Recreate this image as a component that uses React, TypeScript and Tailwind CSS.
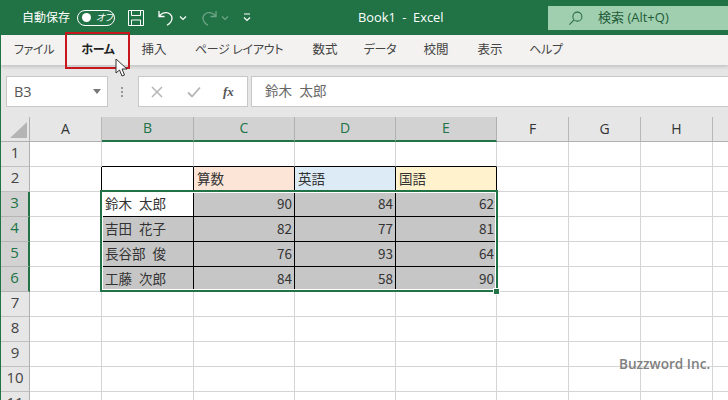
import { ReactNode } from "react";

const jp = "font-['Open_Sans','Noto_Sans_CJK_JP',sans-serif]";
const cellFont = "font-['Noto_Sans_CJK_JP',sans-serif]";
const kana = "[font-feature-settings:'palt'] text-[12px] tracking-[-0.3px]";

const tabs = [
  { label: "ファイル", w: "w-[66px]", cls: kana },
  { label: "ホーム", w: "w-[62px]", bold: true, cls: kana },
  { label: "挿入", w: "w-[50px]", cls: "text-[12.5px]" },
  { label: "ページ レイアウト", w: "w-[120px]", cls: kana },
  { label: "数式", w: "w-[52px]", cls: "text-[12.5px]" },
  { label: "データ", w: "w-[58px]", cls: kana },
  { label: "校閲", w: "w-[54px]", cls: "text-[12.5px]" },
  { label: "表示", w: "w-[54px]", cls: "text-[12.5px]" },
  { label: "ヘルプ", w: "w-[58px]", cls: kana },
];

const columns = [
  { name: "A", w: 72 },
  { name: "B", w: 92, sel: true },
  { name: "C", w: 101, sel: true },
  { name: "D", w: 101, sel: true },
  { name: "E", w: 101, sel: true },
  { name: "F", w: 72 },
  { name: "G", w: 72 },
  { name: "H", w: 72 },
  { name: "", w: 16 },
];

const scores = [
  { name: "鈴木 太郎", v: [90, 84, 62] },
  { name: "吉田 花子", v: [82, 77, 81] },
  { name: "長谷部 俊", v: [76, 93, 64] },
  { name: "工藤 次郎", v: [84, 58, 90] },
];

function Cell({ className = "", children }: { className?: string; children?: ReactNode }) {
  return (
    <div className={`flex items-center border-r border-b overflow-hidden whitespace-nowrap pb-[2px] text-[13.5px] text-[#333] ${cellFont} ${className}`}>
      {children}
    </div>
  );
}

function RowHead({ n, sel }: { n: number; sel?: boolean }) {
  return (
    <div
      className={`flex items-center justify-center border-b pb-[3px] text-[15px] ${sel ? "bg-[#d2d2d2] text-[#217346] border-b-[#b5b5b5] border-r-2 border-r-[#217346]" : "bg-[#e6e6e6] text-[#444] border-b-[#c0c0c0] border-r border-r-[#b0b0b0]"} font-['Open_Sans',sans-serif]`}
    >
      {n}
    </div>
  );
}

function Sheet() {
  const blank = "border-[#d4d4d4]";
  const rows = [];

  for (let r = 1; r <= 11; r++) {
    const cells: ReactNode[] = [];
    const sel = r >= 3 && r <= 6;
    cells.push(<RowHead key="h" n={r} sel={sel} />);

    columns.forEach((c, i) => {
      const key = c.name + i;
      if (r === 1 && i >= 1 && i <= 4) {
        cells.push(<Cell key={key} className="border-r-[#d4d4d4] border-b-black" />);
      } else if (r === 2 && i === 0) {
        cells.push(<Cell key={key} className="border-r-black border-b-[#d4d4d4]" />);
      } else if (r === 2 && i >= 1 && i <= 4) {
        const bg = ["bg-white", "bg-[#fce4d6]", "bg-[#ddebf7]", "bg-[#fff2cc]"][i - 1];
        const txt = ["", "算数", "英語", "国語"][i - 1];
        cells.push(
          <Cell key={key} className={`border-black pl-[3px] ${bg}`}>
            {txt}
          </Cell>,
        );
      } else if (sel && i === 0) {
        cells.push(<Cell key={key} className="border-r-black border-b-[#d4d4d4]" />);
      } else if (sel && i === 1) {
        const first = r === 3;
        cells.push(
          <Cell key={key} className={`border-black pl-[3px] [word-spacing:4px] ${first ? "bg-white" : "bg-[#c6c6c6]"}`}>
            {scores[r - 3].name}
          </Cell>,
        );
      } else if (sel && i <= 4) {
        cells.push(
          <Cell key={key} className="border-black bg-[#c6c6c6] justify-end pr-[2px]">
            {scores[r - 3].v[i - 2]}
          </Cell>,
        );
      } else {
        cells.push(<Cell key={key} className={blank} />);
      }
    });
    rows.push(cells);
  }

  return (
    <div className="relative flex-1 overflow-hidden bg-white">
      <div className="grid grid-cols-[29px_72px_92px_101px_101px_101px_72px_72px_72px_16px] auto-rows-[25px]">
        {/* corner + column headers */}
        <div className="relative bg-[#e6e6e6] border-r border-b border-r-[#b0b0b0] border-b-[#b0b0b0]">
          <svg width="29" height="25" className="absolute left-0 top-0">
            <path d="M9 21 L26 21 L26 5 Z" fill="#b4b4b4" />
          </svg>
        </div>
        {columns.map((c, i) => (
          <div
            key={i}
            className={`flex items-center justify-center border-r pb-[2px] text-[14px] font-['Open_Sans',sans-serif] ${c.sel ? "bg-[#d2d2d2] text-[#217346] border-r-[#b0b0b0] border-b-2 border-b-[#217346]" : "bg-[#e6e6e6] text-[#333] border-r-[#b8b8b8] border-b border-b-[#b0b0b0]"}`}
          >
            {c.name}
          </div>
        ))}
        {rows}
      </div>

      {/* selection range B3:E6 */}
      <div className="absolute left-[99px] top-[73px] w-[398px] h-[102px] border-2 border-[#217346] shadow-[inset_0_0_0_1px_#ffffff] pointer-events-none" />
      <div className="absolute left-[492px] top-[171px] w-[7px] h-[7px] bg-[#217346] border border-white" />

      <div className="absolute left-[618px] top-[237px] text-[13.6px] font-semibold text-[#808080] font-['Open_Sans',sans-serif]">
        Buzzword Inc.
      </div>
    </div>
  );
}

export default function App() {
  return (
    <div className={`relative w-[728px] h-[400px] overflow-hidden flex flex-col border-l border-[#217346] bg-white ${jp}`}>
      {/* Title bar */}
      <header className="h-[35px] shrink-0 bg-[#217346] text-white flex items-center pl-[21px] relative">
        <span className="text-[12px] w-[55px] whitespace-nowrap">自動保存</span>
        <div className="w-[38px] h-[16px] rounded-full border border-white flex items-center pl-[4px] gap-[5px]">
          <span className="w-[9px] h-[9px] rounded-full bg-white" />
          <span className="text-[9.5px] italic leading-none whitespace-nowrap [font-feature-settings:'palt']">オフ</span>
        </div>
        <svg width="16" height="16" viewBox="0 0 16 16" className="ml-[13px]" fill="none" stroke="white" strokeWidth="1">
          <path d="M.5.5h15v15H.5z" />
          <path d="M3.5.5v5h9v-5M3.5 15.5v-5.5h9v5.5" />
        </svg>
        <svg width="18" height="18" viewBox="0 0 18 18" className="ml-[13px]" fill="none" stroke="white" strokeWidth="1.3">
          <path d="M2 2v5.5h5.5M2.2 7.2C4 4.8 6.4 3.6 9 3.6c3.2 0 6 2.4 6 5.6 0 2.7-1.600 5-5 7" />
        </svg>
        <svg width="8" height="6" viewBox="0 0 8 6" className="ml-[4px]" fill="none" stroke="white" strokeWidth="1.2">
          <path d="M1 1.500l3 3 3-3" />
        </svg>
        <svg width="18" height="18" viewBox="0 0 18 18" className="ml-[13px]" fill="none" stroke="#6ea588" strokeWidth="1.3">
          <path d="M16 2v5.500h-5.500M15.800 7.200C14 4.800 11.600 3.600 9 3.600c-3.200 0-6 2.400-6 5.600 0 2.700 1.600 5 5 7" />
        </svg>
        <svg width="8" height="6" viewBox="0 0 8 6" className="ml-[3px]" fill="none" stroke="#6ea588" strokeWidth="1.2">
          <path d="M1 1.500l3 3 3-3" />
        </svg>
        <svg width="8" height="9" viewBox="0 0 8 9" className="ml-[14px]" fill="none" stroke="white" strokeWidth="1.2">
          <path d="M1 1h6M1 4.500l3 3 3-3" />
        </svg>

        <span className="ml-[107px] text-[12.8px] whitespace-pre">Book1  -  Excel</span>

        <div className="absolute left-[547px] top-[6px] w-[181px] h-[24px] bg-[#9fcfae] flex items-center pl-[20px] text-[#1f5c3a]">
          <svg width="15" height="15" viewBox="0 0 16 16" fill="none" stroke="#2a6b45" strokeWidth="1.100">
            <circle cx="10" cy="6" r="4.800" />
            <path d="M6.500 9.500L1.500 14.500" />
          </svg>
          <span className="ml-[15px] text-[13px]">検索 (Alt+Q)</span>
        </div>
      </header>

      {/* Ribbon tabs */}
      <nav className="relative z-10 h-[30px] shrink-0 bg-[#f3f2f1] flex items-center shadow-[0_2px_3px_rgba(0,0,0,0.15)]">
        {tabs.map((t) => (
          <div key={t.label} className={`${t.w} ${t.cls} text-center whitespace-nowrap ${t.bold ? "font-bold text-[#222]" : "text-[#444]"}`}>
            {t.label}
          </div>
        ))}
      </nav>

      {/* Formula bar */}
      <div className="h-[52px] shrink-0 bg-[#e6e6e6] flex items-start pt-[11px]">
        <div className="ml-[5px] w-[102px] h-[31px] bg-white border border-[#c8c8c8] flex items-center pl-[7px] pr-[6px] justify-between">
          <span className="text-[14.5px] text-[#555]">B3</span>
          <svg width="8" height="5" viewBox="0 0 8 5">
            <path d="M0 0h8L4 5z" fill="#777" />
          </svg>
        </div>
        <div className="ml-[13px] h-[31px] flex flex-col items-center justify-center gap-[2px]">
          <span className="w-[2px] h-[2px] bg-[#999]" />
          <span className="w-[2px] h-[2px] bg-[#999]" />
          <span className="w-[2px] h-[2px] bg-[#999]" />
        </div>
        <div className="ml-[15px] w-[110px] h-[31px] bg-white border border-[#c8c8c8] flex items-center pl-[12px]">
          <svg width="12" height="12" viewBox="0 0 12 12" fill="none" stroke="#b5b5b5" strokeWidth="1.500">
            <path d="M1 1l10 10M11 1L1 11" />
          </svg>
          <svg width="14" height="12" viewBox="0 0 14 12" className="ml-[24px]" fill="none" stroke="#b5b5b5" strokeWidth="1.800">
            <path d="M1 6.500l4 4L13 1.500" />
          </svg>
          <span className="ml-[22px] text-[13px] font-bold italic text-[#555] font-['Liberation_Serif',serif]">fx</span>
        </div>
        <div className="ml-[3px] flex-1 h-[31px] bg-white border-y border-l border-[#c8c8c8] flex items-center pl-[13px] pb-[1px] text-[13.5px] text-[#666] [word-spacing:4px]">
          鈴木 太郎
        </div>
      </div>

      <Sheet />

      {/* red highlight around the tab, with the pointer */}
      <div className="absolute z-20 left-[64px] top-[32px] w-[65px] h-[37px] border-[2.5px] border-[#c8161d] pointer-events-none" />
      <svg width="14" height="20" viewBox="0 0 14 20" className="absolute z-30 left-[114px] top-[58px]">
        <path d="M1 1v14l3.500-3 2.500 6 2.500-1-2.500-6h5z" fill="white" stroke="#333" strokeWidth="1" />
      </svg>
    </div>
  );
}
